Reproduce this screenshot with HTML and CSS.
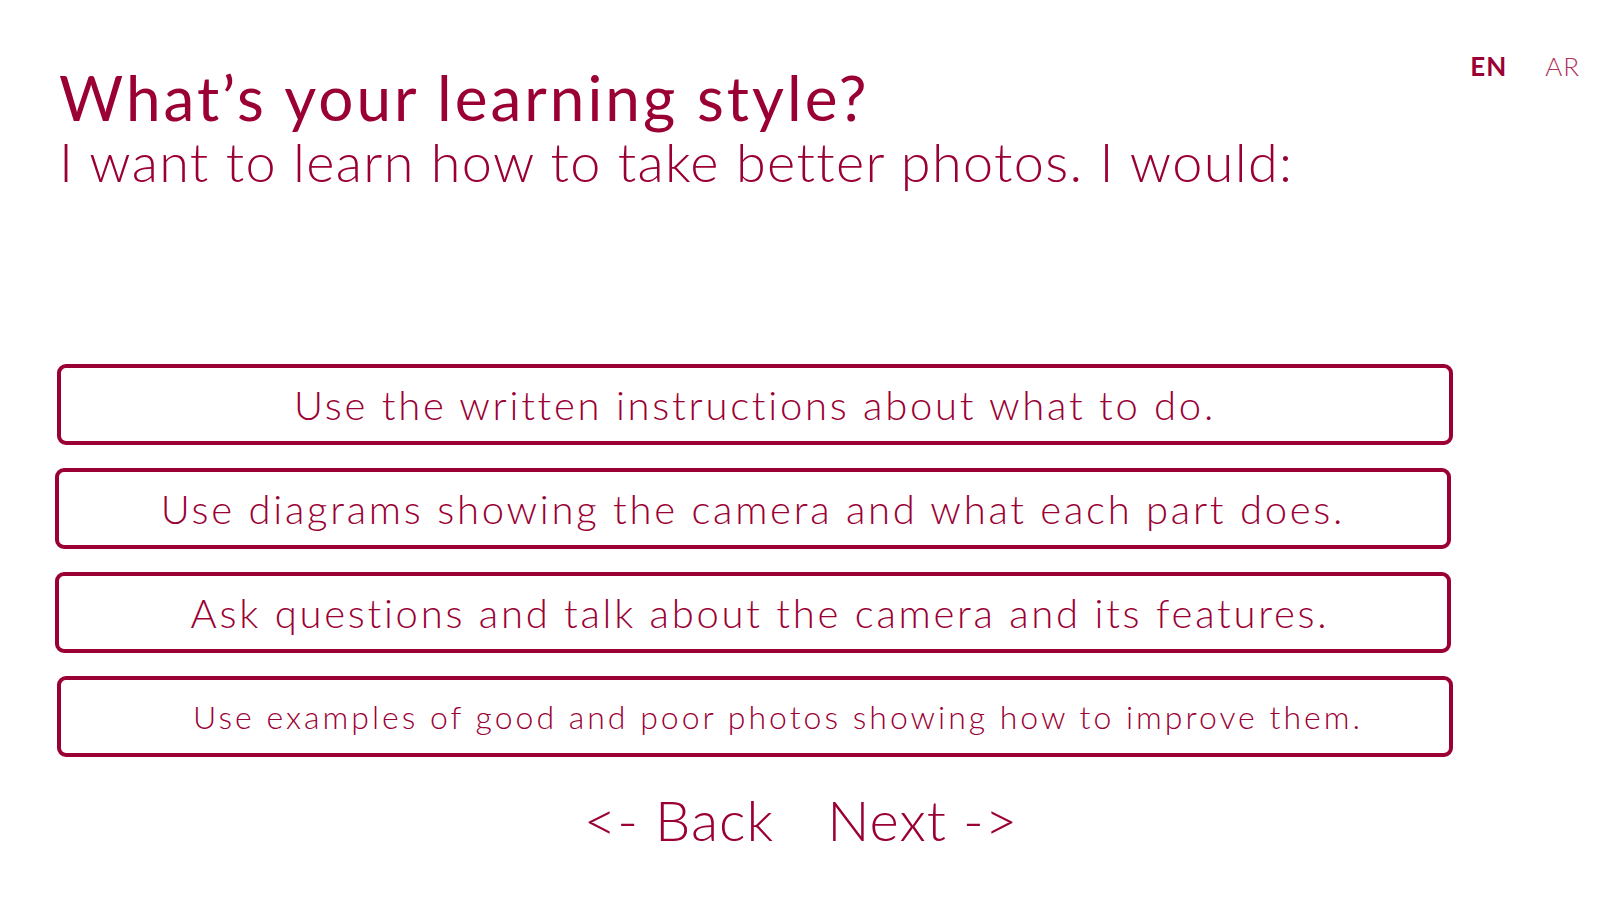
FILE: index.html
```html
<!DOCTYPE html>
<html lang="en">
<head>
<meta charset="utf-8">
<title>Learning style</title>
<link rel="stylesheet" href="styles.css">
</head>
<body>
<div class="page">
  <header class="top">
    <div class="heading">
      <h1 class="title">What’s your learning style?</h1>
      <p class="question">I want to learn how to take better photos. I would:</p>
    </div>
    <nav class="lang">
      <a class="lang-item active">EN</a>
      <a class="lang-item">AR</a>
    </nav>
  </header>
  <section class="options">
    <button class="option">Use the written instructions about what to do.</button>
    <button class="option shift">Use diagrams showing the camera and what each part does.</button>
    <button class="option shift nudge">Ask questions and talk about the camera and its features.</button>
    <button class="option small">Use examples of good and poor photos showing how to improve them.</button>
  </section>
  <nav class="pager">
    <a class="pager-link">&lt;- Back</a>
    <a class="pager-link">Next -&gt;</a>
  </nav>
</div>
</body>
</html>
```
FILE: styles.css
```css
* { box-sizing: border-box; }
html, body { margin: 0; padding: 0; background: #fff; }
body {
  font-family: Lato, "Open Sans", sans-serif;
  font-weight: 300;
  color: #9b0034;
  width: 1613px;
  height: 907px;
  overflow: hidden;
}
.page {
  padding: 0 0 0 57px;
}
.top {
  display: flex;
  justify-content: space-between;
  align-items: flex-start;
  padding-right: 33px;
}
.title {
  margin: 62px 0 0 2px;
  font-size: 62px;
  font-weight: 400;
  line-height: 70px;
  letter-spacing: 3px;
}
.question {
  margin: -2px 0 0 2px;
  font-size: 54px;
  font-weight: 300;
  line-height: 64px;
  letter-spacing: 1.35px;
}
.lang {
  display: flex;
  gap: 38px;
  margin-top: 50px;
}
.lang-item {
  font-size: 26px;
  font-weight: 300;
  color: #b0305a;
  letter-spacing: 1px;
}
.lang-item.active {
  font-weight: 700;
  color: #9b0034;
}
.options {
  display: flex;
  flex-direction: column;
  gap: 23px;
  margin-top: 170px;
  width: 1396px;
}
.option {
  display: block;
  width: 100%;
  height: 81px;
  border: 4px solid #9b0034;
  border-radius: 9px;
  background: #fff;
  color: #9b0034;
  font-family: inherit;
  font-weight: 300;
  font-size: 40px;
  letter-spacing: 2.75px;
  padding: 0;
}
.option.shift {
  margin-left: -2px;
}
.option.nudge {
  padding-left: 14px;
}
.option.small {
  font-size: 32px;
  letter-spacing: 3px;
  padding-left: 46px;
}
.pager {
  display: flex;
  justify-content: center;
  gap: 53px;
  margin: 28px 0 0 0;
  width: 1396px;
  padding-left: 92px;
}
.pager-link {
  font-size: 56px;
  font-weight: 300;
  letter-spacing: 1px;
  line-height: 70px;
}
```
